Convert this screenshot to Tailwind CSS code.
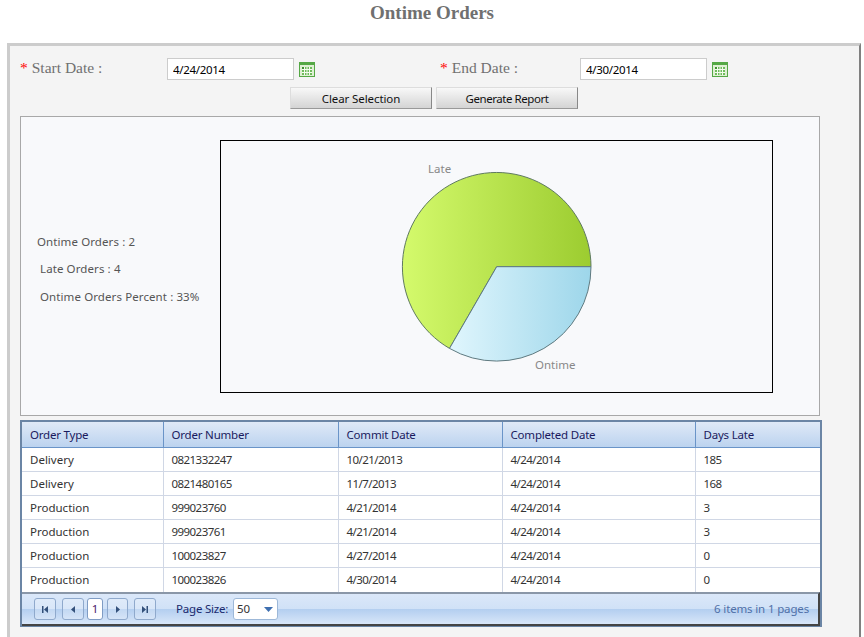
<!DOCTYPE html>
<html lang="en">
<head>
    <meta charset="UTF-8">
    <title>Ontime Orders</title>
    <script src="https://cdn.jsdelivr.net/npm/@tailwindcss/browser@4"></script>
</head>
<body class="bg-white overflow-hidden h-[637px] font-['Noto_Sans',sans-serif]">
    <h1 class="h-[43px] pt-[3px] text-center font-['Liberation_Serif',serif] font-bold text-[19px] leading-[20px] text-[#707070]">Ontime Orders</h1>

    <main class="ml-[7px] w-[854px] h-[594px] bg-[#f4f4f4] border-t-[3px] border-l-[3px] border-r-2 border-[#ccc] border-r-[#808080] pl-[10px] pt-[11px]">
        <!-- Date filters -->
        <div class="flex items-center h-[24px] font-['Liberation_Serif',serif] text-[15.5px] text-[#707070]">
            <div class="w-[147px] pb-[2px]"><span class="text-[#f00] mr-[4px]">*</span>Start Date :</div>
            <input type="text" value="4/24/2014" class="w-[127px] h-[22px] border border-[#ccc] bg-white pl-[5px] font-['Noto_Sans',sans-serif] text-[11.5px] tracking-[-0.3px] text-black">
            <svg class="ml-[5px] mt-[1px]" width="16" height="15" viewBox="0 0 16 15">
                <rect width="16" height="15" fill="#55a845"/>
                <rect x="1" y="3" width="14" height="11" fill="#dff0d4"/>
                <rect x="3" y="5" width="10" height="8" fill="#6fbb5c"/>
                <path d="M3 7.5h10M3 10.5h10M5.5 5v8M8 5v8M10.5 5v8" stroke="#f4fbee"/>
                <rect x="3" y="5" width="2" height="2" fill="#3f8f30"/>
            </svg>
            <div class="w-[140px] ml-[125px] pb-[2px]"><span class="text-[#f00] mr-[4px]">*</span>End Date :</div>
            <input type="text" value="4/30/2014" class="w-[127px] h-[22px] border border-[#ccc] bg-white pl-[5px] font-['Noto_Sans',sans-serif] text-[11.5px] tracking-[-0.3px] text-black">
            <svg class="ml-[5px] mt-[1px]" width="16" height="15" viewBox="0 0 16 15">
                <rect width="16" height="15" fill="#55a845"/>
                <rect x="1" y="3" width="14" height="11" fill="#dff0d4"/>
                <rect x="3" y="5" width="10" height="8" fill="#6fbb5c"/>
                <path d="M3 7.5h10M3 10.5h10M5.5 5v8M8 5v8M10.5 5v8" stroke="#f4fbee"/>
                <rect x="3" y="5" width="2" height="2" fill="#3f8f30"/>
            </svg>
        </div>

        <div class="flex gap-[4px] ml-[270px] mt-[6px]">
            <button class="w-[142px] h-[22px] pt-[1px] border border-[#ddd] border-r-[#888] border-b-[#999] bg-gradient-to-b from-[#f8f8f8] to-[#d4d4d4] text-[11.5px] tracking-[-0.1px] text-[#111]">Clear Selection</button>
            <button class="w-[142px] h-[22px] pt-[1px] border border-[#ddd] border-r-[#888] border-b-[#999] bg-gradient-to-b from-[#f8f8f8] to-[#d4d4d4] text-[11.5px] tracking-[-0.45px] text-[#111]">Generate Report</button>
        </div>

        <!-- Chart -->
        <section class="mt-[7px] w-[800px] h-[300px] border border-[#a8a8a8] bg-[#f8f9fb] flex pt-[23px]">
            <div class="w-[199px] pt-[93px] text-[11.5px] tracking-[0.1px] text-[#555]">
                <p class="pl-[16px] h-[27px]">Ontime Orders : 2</p>
                <p class="pl-[19px] h-[28px]">Late Orders : 4</p>
                <p class="pl-[19px]">Ontime Orders Percent : 33%</p>
            </div>
            <div class="w-[553px] h-[253px] border border-black">
                <svg width="551" height="251" viewBox="0 0 551 251">
                    <defs>
                        <linearGradient id="lateFill" x1="0" x2="1" y1="0" y2="0">
                            <stop offset="0" stop-color="#d4fa6c"/>
                            <stop offset="1" stop-color="#9ccc30"/>
                        </linearGradient>
                        <linearGradient id="ontimeFill" x1="0" x2="1" y1="0" y2="0">
                            <stop offset="0" stop-color="#e0f6fd"/>
                            <stop offset="1" stop-color="#9dd6ea"/>
                        </linearGradient>
                    </defs>
                    <path d="M275.7 125.7 L228.5 207.4 A94.3 94.3 0 1 1 370 125.7 Z" fill="url(#lateFill)" stroke="#5f7a60"/>
                    <path d="M275.7 125.7 H370 A94.3 94.3 0 0 1 228.5 207.4 Z" fill="url(#ontimeFill)" stroke="#5f7a80"/>
                    <text x="207" y="32" font-size="11.5" fill="#888">Late</text>
                    <text x="314" y="228" font-size="11.5" fill="#888">Ontime</text>
                </svg>
            </div>
        </section>

        <!-- Orders grid -->
        <section class="mt-[4px] w-[802px] border-x-2 border-t-2 border-b border-[#6b85a5]">
            <table class="w-full table-fixed text-[11.5px] text-[#333]">
                <colgroup>
                    <col class="w-[141px]"><col class="w-[175px]"><col class="w-[164px]"><col class="w-[193px]"><col>
                </colgroup>
                <thead class="bg-gradient-to-b from-[#dfe9f7] to-[#bcd3ef] text-[#1a1a5e] tracking-[-0.2px]">
                    <tr class="h-[25px] border-b border-[#6a94c8]">
                        <th class="font-normal text-left pl-[8px] pt-[1px] border-r border-[#6a94c8]">Order Type</th>
                        <th class="font-normal text-left pl-[8px] pt-[1px] border-r border-[#6a94c8]">Order Number</th>
                        <th class="font-normal text-left pl-[8px] pt-[1px] border-r border-[#6a94c8]">Commit Date</th>
                        <th class="font-normal text-left pl-[8px] pt-[1px] border-r border-[#6a94c8]">Completed Date</th>
                        <th class="font-normal text-left pl-[8px] pt-[1px]">Days Late</th>
                    </tr>
                </thead>
                <tbody class="bg-white">
                    <tr class="h-[24px] border-b border-[#d0d7e5]"><td class="pl-[8px] pt-[2px] border-r border-[#d0d7e5]">Delivery</td><td class="pl-[8px] pt-[2px] tracking-[-0.55px] border-r border-[#d0d7e5]">0821332247</td><td class="pl-[8px] pt-[2px] tracking-[-0.55px] border-r border-[#d0d7e5]">10/21/2013</td><td class="pl-[8px] pt-[2px] tracking-[-0.55px] border-r border-[#d0d7e5]">4/24/2014</td><td class="pl-[8px] pt-[2px] tracking-[-0.55px]">185</td></tr>
                    <tr class="h-[24px] border-b border-[#d0d7e5]"><td class="pl-[8px] pt-[2px] border-r border-[#d0d7e5]">Delivery</td><td class="pl-[8px] pt-[2px] tracking-[-0.55px] border-r border-[#d0d7e5]">0821480165</td><td class="pl-[8px] pt-[2px] tracking-[-0.55px] border-r border-[#d0d7e5]">11/7/2013</td><td class="pl-[8px] pt-[2px] tracking-[-0.55px] border-r border-[#d0d7e5]">4/24/2014</td><td class="pl-[8px] pt-[2px] tracking-[-0.55px]">168</td></tr>
                    <tr class="h-[24px] border-b border-[#d0d7e5]"><td class="pl-[8px] pt-[2px] border-r border-[#d0d7e5]">Production</td><td class="pl-[8px] pt-[2px] tracking-[-0.55px] border-r border-[#d0d7e5]">999023760</td><td class="pl-[8px] pt-[2px] tracking-[-0.55px] border-r border-[#d0d7e5]">4/21/2014</td><td class="pl-[8px] pt-[2px] tracking-[-0.55px] border-r border-[#d0d7e5]">4/24/2014</td><td class="pl-[8px] pt-[2px] tracking-[-0.55px]">3</td></tr>
                    <tr class="h-[24px] border-b border-[#d0d7e5]"><td class="pl-[8px] pt-[2px] border-r border-[#d0d7e5]">Production</td><td class="pl-[8px] pt-[2px] tracking-[-0.55px] border-r border-[#d0d7e5]">999023761</td><td class="pl-[8px] pt-[2px] tracking-[-0.55px] border-r border-[#d0d7e5]">4/21/2014</td><td class="pl-[8px] pt-[2px] tracking-[-0.55px] border-r border-[#d0d7e5]">4/24/2014</td><td class="pl-[8px] pt-[2px] tracking-[-0.55px]">3</td></tr>
                    <tr class="h-[24px] border-b border-[#d0d7e5]"><td class="pl-[8px] pt-[2px] border-r border-[#d0d7e5]">Production</td><td class="pl-[8px] pt-[2px] tracking-[-0.55px] border-r border-[#d0d7e5]">100023827</td><td class="pl-[8px] pt-[2px] tracking-[-0.55px] border-r border-[#d0d7e5]">4/27/2014</td><td class="pl-[8px] pt-[2px] tracking-[-0.55px] border-r border-[#d0d7e5]">4/24/2014</td><td class="pl-[8px] pt-[2px] tracking-[-0.55px]">0</td></tr>
                    <tr class="h-[25px]"><td class="pl-[8px] border-r border-[#d0d7e5]">Production</td><td class="pl-[8px] tracking-[-0.55px] border-r border-[#d0d7e5]">100023826</td><td class="pl-[8px] tracking-[-0.55px] border-r border-[#d0d7e5]">4/30/2014</td><td class="pl-[8px] tracking-[-0.55px] border-r border-[#d0d7e5]">4/24/2014</td><td class="pl-[8px] tracking-[-0.55px]">0</td></tr>
                </tbody>
            </table>
            <!-- Pager -->
            <div class="h-[34px] flex items-center border-t-2 border-t-[#8a97a8] border-r-2 border-b-2 border-r-[#444] border-b-[#444] pl-[12px] pr-[9px] text-[11.5px] bg-[linear-gradient(#dbe8f9_0%,#d0e1f7_50%,#b3cef0_50%,#d8e6f8_100%)]">
                <button class="w-[22px] h-[22px] flex items-center justify-center border border-[#8fa9cc] rounded-[3px] bg-white/20">
                    <svg width="8" height="9" viewBox="0 0 8 9"><path d="M1 1h1.5v7H1zM7 1v7L3 4.5z" fill="#33507a"/></svg>
                </button>
                <button class="ml-[6px] w-[22px] h-[22px] flex items-center justify-center border border-[#8fa9cc] rounded-[3px] bg-white/20">
                    <svg width="6" height="9" viewBox="0 0 6 9"><path d="M5 1v7L1 4.5z" fill="#33507a"/></svg>
                </button>
                <span class="ml-[3px] w-[16px] h-[22px] flex items-center justify-center border border-[#7f9cc4] rounded-[3px] bg-white text-[#4a1a6a]">1</span>
                <button class="ml-[4px] w-[21px] h-[22px] flex items-center justify-center border border-[#8fa9cc] rounded-[3px] bg-white/20">
                    <svg width="6" height="9" viewBox="0 0 6 9"><path d="M1 1v7l4-3.5z" fill="#33507a"/></svg>
                </button>
                <button class="ml-[6px] w-[22px] h-[22px] flex items-center justify-center border border-[#8fa9cc] rounded-[3px] bg-white/20">
                    <svg width="8" height="9" viewBox="0 0 8 9"><path d="M1 1v7l4-3.5zM5.5 1H7v7H5.5z" fill="#33507a"/></svg>
                </button>
                <span class="ml-[20px] w-[57px] tracking-[-0.2px] text-[#1a2a6e]">Page Size:</span>
                <div class="w-[45px] h-[22px] flex items-center justify-between border border-[#9db8d8] rounded-[3px] bg-white pl-[3px] pr-[4px] text-[#333]">
                    <span>50</span>
                    <svg width="9" height="5" viewBox="0 0 9 5"><path d="M0 0h9L4.5 5z" fill="#3f6fb0"/></svg>
                </div>
                <span class="ml-auto tracking-[-0.15px] text-[#5070a8]">6 items in 1 pages</span>
            </div>
        </section>
    </main>
</body>
</html>
